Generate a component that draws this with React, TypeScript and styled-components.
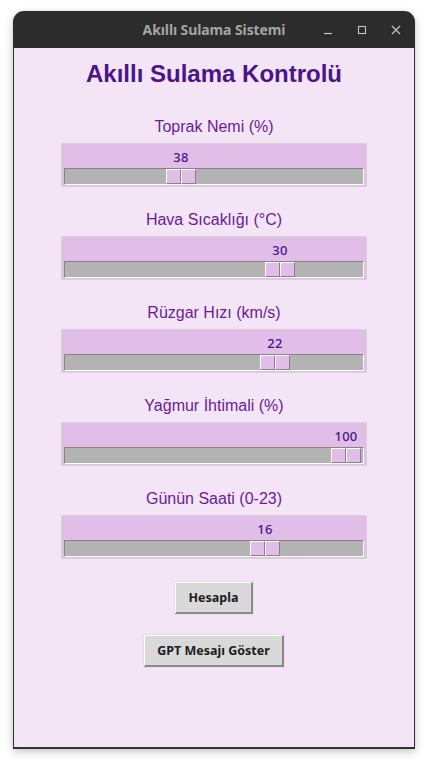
import React from "react";
import styled, { createGlobalStyle } from "styled-components";

const Global = createGlobalStyle`
  html, body { margin: 0; padding: 0; background: #ffffff; }
  body { width: 428px; height: 766px; overflow: hidden; font-family: "Liberation Sans", Arial, sans-serif; }
`;

const Page = styled.div`
  padding: 11px 13px 0 13px;
  box-sizing: border-box;
  width: 428px;
  height: 766px;
`;

const Window = styled.div`
  width: 402px;
  display: flex;
  flex-direction: column;
  border-radius: 11px 11px 0 0;
  box-shadow: 0 3px 10px rgba(0, 0, 0, 0.22), 0 0 1px rgba(0, 0, 0, 0.3);
`;

const TitleBar = styled.div`
  height: 37px;
  background: #2c2c2c;
  border-radius: 11px 11px 0 0;
  display: grid;
  grid-template-columns: 1fr auto 1fr;
  align-items: center;
`;

const Title = styled.div`
  grid-column: 2;
  font-family: "Noto Sans", "Open Sans", sans-serif;
  font-weight: 700;
  font-size: 14px;
  color: #a4a4a4;
  letter-spacing: -0.1px;
`;

const Controls = styled.div`
  grid-column: 3;
  justify-self: end;
  display: flex;
  gap: 10px;
  padding-right: 7px;
`;

const Ctl = styled.div`
  width: 24px;
  height: 24px;
  display: flex;
  align-items: center;
  justify-content: center;
  color: #c4c4c4;
`;

const Content = styled.div`
  height: 699px;
  background: #f3e5f5;
  border: 1px solid #353035;
  border-top: none;
  border-bottom-width: 2px;
  display: flex;
  flex-direction: column;
  align-items: center;
`;

const Heading = styled.h1`
  margin: 12px 0 0 0;
  font-size: 24px;
  line-height: 28px;
  font-weight: 700;
  color: #4a148c;
`;

const Blocks = styled.div`
  margin-top: 29px;
  display: flex;
  flex-direction: column;
  align-items: center;
  gap: 23px;
`;

const Block = styled.div`
  display: flex;
  flex-direction: column;
  align-items: center;
  gap: 6px;
`;

const Label = styled.div`
  font-size: 16px;
  line-height: 20px;
  color: #6a1b9a;
`;

const ScaleFrame = styled.div`
  width: 302px;
  border: 1px solid #dad0da;
  background: #e1bee7;
  padding: 0 1px 1px 1px;
  display: flex;
  flex-direction: column;
`;

const ValueRow = styled.div`
  position: relative;
  height: 24px;
`;

const Value = styled.span`
  position: absolute;
  top: 4px;
  transform: translateX(-50%);
  font-family: "Noto Sans", "Open Sans", sans-serif;
  font-size: 13px;
  font-weight: 500;
  line-height: 18px;
  color: #4a148c;
  letter-spacing: 0.2px;
`;

const Trough = styled.div`
  position: relative;
  height: 15px;
  background: #b3b3b3;
  border-style: solid;
  border-width: 1px;
  border-color: #8d7d8d #ffffff #ffffff #8d7d8d;
  margin: 0 1px;
`;

const Thumb = styled.div`
  position: absolute;
  top: 0;
  width: 30px;
  height: 15px;
  box-sizing: border-box;
  display: flex;
`;

const ThumbHalf = styled.div`
  flex: 1;
  background: #e1bee7;
  border-style: solid;
  border-width: 1px;
  border-color: #ffffff #8d7d8d #8d7d8d #ffffff;
`;

const Buttons = styled.div`
  margin-top: 23px;
  display: flex;
  flex-direction: column;
  align-items: center;
  gap: 21px;
`;

const Button = styled.button<{ $px: number }>`
  height: 32px;
  padding: 0 ${(p) => p.$px}px;
  background: #d9d9d9;
  border-style: solid;
  border-width: 1px 2px 2px 1px;
  border-color: #ffffff #8a8a8a #8a8a8a #ffffff;
  box-shadow: 0 0 0 1px #e6dde6;
  font-family: "Noto Sans", "Open Sans", sans-serif;
  font-weight: 700;
  font-size: 12.5px;
  color: #1c1c1c;
  cursor: pointer;
`;

type S = { label: string; value: number; min: number; max: number };

const sliders: S[] = [
  { label: "Toprak Nemi (%)", value: 38, min: 0, max: 100 },
  { label: "Hava Sıcaklığı (°C)", value: 30, min: 0, max: 40 },
  { label: "Rüzgar Hızı (km/s)", value: 22, min: 0, max: 30 },
  { label: "Yağmur İhtimali (%)", value: 100, min: 0, max: 100 },
  { label: "Günün Saati (0-23)", value: 16, min: 0, max: 23 },
];

const TROUGH_INNER = 296;
const THUMB = 30;

function Scale({ s }: { s: S }) {
  const frac = (s.value - s.min) / (s.max - s.min);
  const left = Math.round(frac * (TROUGH_INNER - THUMB));
  const center = left + THUMB / 2 + 2;
  return (
    <Block>
      <Label>{s.label}</Label>
      <ScaleFrame>
        <ValueRow>
          <Value style={{ left: center }}>{s.value}</Value>
        </ValueRow>
        <Trough>
          <Thumb style={{ left }}>
            <ThumbHalf />
            <ThumbHalf />
          </Thumb>
        </Trough>
      </ScaleFrame>
    </Block>
  );
}

export default function App() {
  return (
    <>
      <Global />
      <Page>
        <Window>
          <TitleBar>
            <Title>Akıllı Sulama Sistemi</Title>
            <Controls>
              <Ctl>
                <svg width="10" height="10" viewBox="0 0 10 10">
                  <line x1="1" y1="8.5" x2="9" y2="8.5" stroke="currentColor" strokeWidth="1.2" />
                </svg>
              </Ctl>
              <Ctl>
                <svg width="10" height="10" viewBox="0 0 10 10">
                  <rect x="1.5" y="1.5" width="7" height="7" fill="none" stroke="currentColor" strokeWidth="1.1" />
                </svg>
              </Ctl>
              <Ctl>
                <svg width="10" height="10" viewBox="0 0 10 10">
                  <path d="M1 1 L9 9 M9 1 L1 9" stroke="currentColor" strokeWidth="1.2" />
                </svg>
              </Ctl>
            </Controls>
          </TitleBar>
          <Content>
            <Heading>Akıllı Sulama Kontrolü</Heading>
            <Blocks>
              {sliders.map((s) => (
                <Scale key={s.label} s={s} />
              ))}
            </Blocks>
            <Buttons>
              <Button $px={13}>Hesapla</Button>
              <Button $px={12}>GPT Mesajı Göster</Button>
            </Buttons>
          </Content>
        </Window>
      </Page>
    </>
  );
}
